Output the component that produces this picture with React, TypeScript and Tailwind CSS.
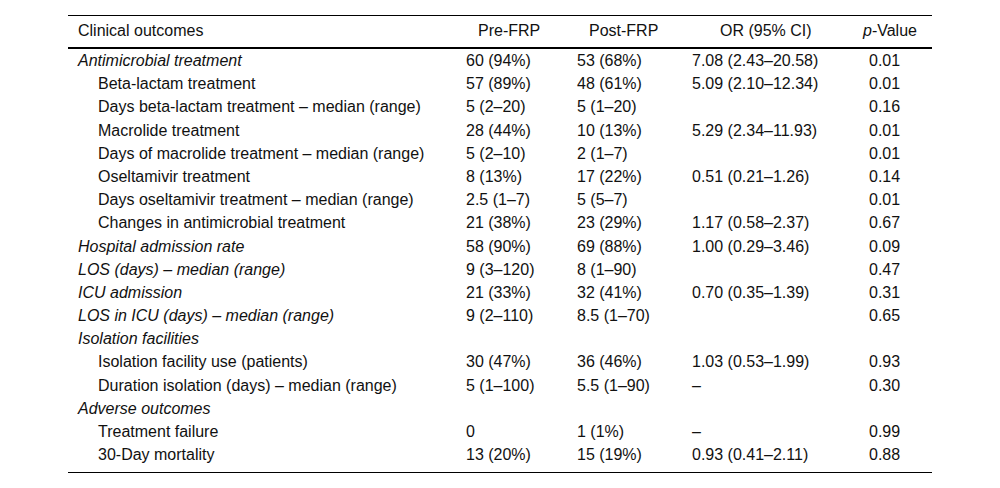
import React from 'react';

type Row = {
  label: string;
  pre?: string;
  post?: string;
  or?: string;
  p?: string;
  heading?: boolean;
};

// Clinical outcomes before and after the FRP introduction
const rows: Row[] = [
  { label: 'Antimicrobial treatment', pre: '60 (94%)', post: '53 (68%)', or: '7.08 (2.43–20.58)', p: '0.01', heading: true },
  { label: 'Beta-lactam treatment', pre: '57 (89%)', post: '48 (61%)', or: '5.09 (2.10–12.34)', p: '0.01' },
  { label: 'Days beta-lactam treatment – median (range)', pre: '5 (2–20)', post: '5 (1–20)', p: '0.16' },
  { label: 'Macrolide treatment', pre: '28 (44%)', post: '10 (13%)', or: '5.29 (2.34–11.93)', p: '0.01' },
  { label: 'Days of macrolide treatment – median (range)', pre: '5 (2–10)', post: '2 (1–7)', p: '0.01' },
  { label: 'Oseltamivir treatment', pre: '8 (13%)', post: '17 (22%)', or: '0.51 (0.21–1.26)', p: '0.14' },
  { label: 'Days oseltamivir treatment – median (range)', pre: '2.5 (1–7)', post: '5 (5–7)', p: '0.01' },
  { label: 'Changes in antimicrobial treatment', pre: '21 (38%)', post: '23 (29%)', or: '1.17 (0.58–2.37)', p: '0.67' },
  { label: 'Hospital admission rate', pre: '58 (90%)', post: '69 (88%)', or: '1.00 (0.29–3.46)', p: '0.09', heading: true },
  { label: 'LOS (days) – median (range)', pre: '9 (3–120)', post: '8 (1–90)', p: '0.47', heading: true },
  { label: 'ICU admission', pre: '21 (33%)', post: '32 (41%)', or: '0.70 (0.35–1.39)', p: '0.31', heading: true },
  { label: 'LOS in ICU (days) – median (range)', pre: '9 (2–110)', post: '8.5 (1–70)', p: '0.65', heading: true },
  { label: 'Isolation facilities', heading: true },
  { label: 'Isolation facility use (patients)', pre: '30 (47%)', post: '36 (46%)', or: '1.03 (0.53–1.99)', p: '0.93' },
  { label: 'Duration isolation (days) – median (range)', pre: '5 (1–100)', post: '5.5 (1–90)', or: '–', p: '0.30' },
  { label: 'Adverse outcomes', heading: true },
  { label: 'Treatment failure', pre: '0', post: '1 (1%)', or: '–', p: '0.99' },
  { label: '30-Day mortality', pre: '13 (20%)', post: '15 (19%)', or: '0.93 (0.41–2.11)', p: '0.88' },
];

const cols = 'grid grid-cols-[392px_111px_115px_177px_69px]';

export default function App() {
  return (
    <div
      className="w-[1000px] h-[488px] bg-white text-[#111] pt-[15px] pl-[68px] text-[16px]"
      style={{ fontFamily: '"Liberation Sans", Arial, sans-serif' }}
    >
      <div className="w-[864px] flex flex-col">
        <div className="h-px bg-black" />
        {/* Header */}
        <div className={`${cols} h-[31px] items-center pb-[1px]`}>
          <div className="pl-[10px]">Clinical outcomes</div>
          <div className="pl-[18px]">Pre-FRP</div>
          <div className="pl-[18px]">Post-FRP</div>
          <div className="pl-[34px]">OR (95% CI)</div>
          <div>
            <i>p</i>-Value
          </div>
        </div>
        <div className="h-[2px] bg-black" />

        {/* Body */}
        {rows.map((r) => (
          <div key={r.label} className={`${cols} h-[23.2px] items-center whitespace-nowrap`}>
            <div className={r.heading ? 'italic pl-[10px]' : 'pl-[30px]'}>{r.label}</div>
            <div className="pl-[6px]">{r.pre}</div>
            <div className="pl-[6px]">{r.post}</div>
            <div className="pl-[6px]">{r.or}</div>
            <div className="pl-[6px]">{r.p}</div>
          </div>
        ))}
        <div className="h-px bg-black mt-[6px]" />
      </div>
    </div>
  );
}
